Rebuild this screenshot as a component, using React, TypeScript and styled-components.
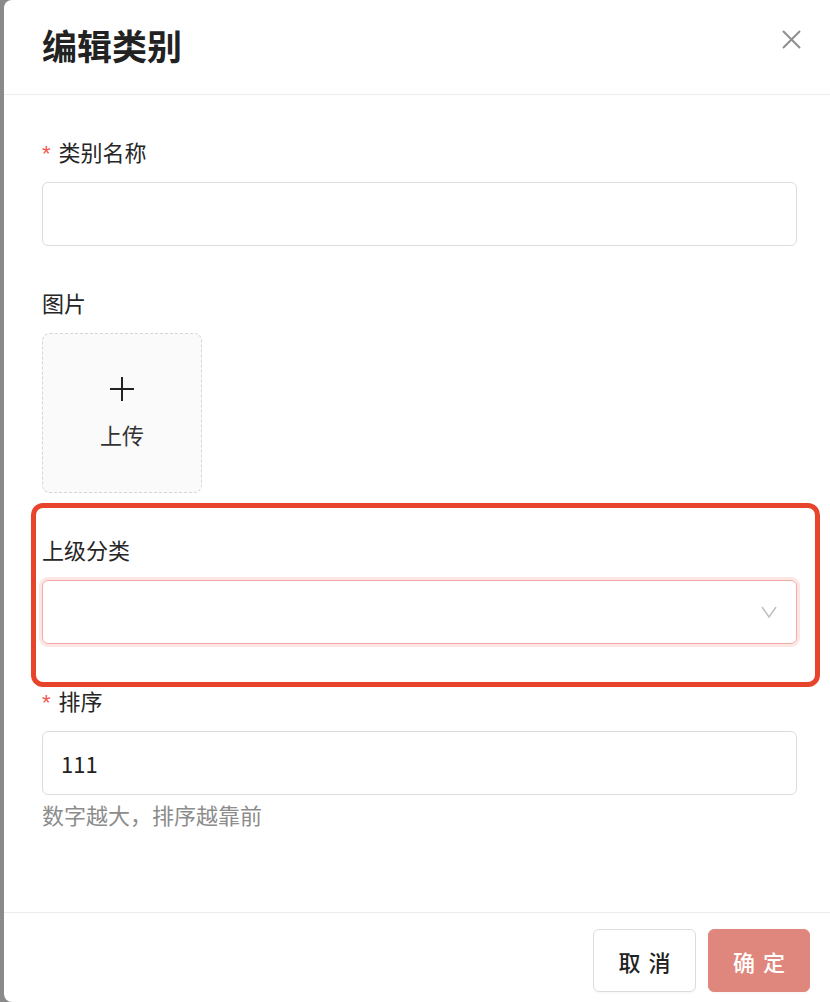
import React from "react";
import styled, { createGlobalStyle } from "styled-components";

const GlobalStyle = createGlobalStyle`
  html, body {
    margin: 0;
    padding: 0;
    height: 100%;
  }
  body {
    font-family: "Noto Sans CJK SC", "Noto Sans", sans-serif;
    color: #303133;
  }
  #root {
    height: 100%;
  }
`;

const Backdrop = styled.div`
  height: 100vh;
  background: #8a8a8a;
  padding-left: 4px;
  box-sizing: border-box;
  display: flex;
  overflow: hidden;
`;

const Dialog = styled.div`
  flex: 1;
  background: #fff;
  border-radius: 8px 0 0 8px;
  display: flex;
  flex-direction: column;
`;

const Header = styled.div`
  height: 95px;
  box-sizing: border-box;
  padding: 22px 28px 0 38px;
  border-bottom: 1px solid #ececec;
  display: flex;
  justify-content: space-between;
  align-items: flex-start;
`;

const Title = styled.h2`
  margin: 0;
  font-size: 35px;
  line-height: 46px;
  font-weight: 700;
  color: #222;
`;

const CloseButton = styled.button`
  border: none;
  background: none;
  padding: 0;
  margin-top: 6px;
  width: 22px;
  height: 22px;
  display: flex;
  align-items: center;
  justify-content: center;
  cursor: pointer;
`;

const Body = styled.div`
  flex: 1;
  padding: 41px 33px 0 38px;
`;

const FormItem = styled.div<{ $marked?: boolean }>`
  position: relative;
  margin-bottom: 41px;

  ${(p) =>
    p.$marked &&
    `
    &::after {
      content: "";
      position: absolute;
      top: -31px;
      bottom: -43px;
      left: -11px;
      right: -23px;
      border: 5px solid #e8432b;
      border-radius: 12px;
      pointer-events: none;
    }
  `}
`;

const Label = styled.div`
  font-size: 22px;
  line-height: 30px;
  color: #262626;
  margin-bottom: 16px;
  display: flex;
  align-items: center;
`;

const Required = styled.span`
  color: #f2564a;
  font-size: 22px;
  margin-right: 8px;
  font-family: "Liberation Sans", sans-serif;
  position: relative;
  top: 3px;
`;

const Input = styled.input<{ $danger?: boolean }>`
  display: block;
  width: 100%;
  height: 64px;
  box-sizing: border-box;
  border: 1px solid #dcdcdc;
  border-radius: 6px;
  padding: 0 18px;
  font-size: 22px;
  font-family: "Noto Sans CJK SC", "Noto Sans", sans-serif;
  color: #222;
  outline: none;
  background: #fff;
`;

const SelectBox = styled.div`
  height: 64px;
  box-sizing: border-box;
  border: 1px solid #f3aca4;
  border-radius: 6px;
  box-shadow: 0 0 0 3px #fbe6e3;
  display: flex;
  align-items: center;
  justify-content: flex-end;
  padding-right: 19px;
`;

const Uploader = styled.div`
  width: 160px;
  height: 160px;
  box-sizing: border-box;
  border: 1px dashed #d6d6d6;
  border-radius: 8px;
  background: #fafafa;
  display: flex;
  flex-direction: column;
  align-items: center;
  justify-content: center;
  gap: 18px;
`;

const UploadText = styled.div`
  font-size: 22px;
  line-height: 30px;
  color: #333;
`;

const Help = styled.div`
  margin-top: 4px;
  font-size: 22px;
  line-height: 30px;
  color: #8c8c8c;
`;

const Footer = styled.div`
  height: 90px;
  box-sizing: border-box;
  border-top: 1px solid #ececec;
  padding: 16px 20px 0 0;
  display: flex;
  justify-content: flex-end;
  align-items: flex-start;
  gap: 12px;
`;

const Button = styled.button<{ $primary?: boolean }>`
  height: 63px;
  width: ${(p) => (p.$primary ? "102px" : "103px")};
  box-sizing: border-box;
  border-radius: 6px;
  border: 1px solid ${(p) => (p.$primary ? "#e0877d" : "#dcdcdc")};
  background: ${(p) => (p.$primary ? "#e0877d" : "#fff")};
  color: ${(p) => (p.$primary ? "#fff" : "#222")};
  font-family: "Noto Sans CJK SC", "Noto Sans", sans-serif;
  font-size: 22px;
  font-weight: 500;
  letter-spacing: 8px;
  padding: 0 0 0 8px;
  box-shadow: 0 2px 0 rgba(0, 0, 0, 0.02);
  cursor: pointer;
`;

export default function App() {
  return (
    <>
      <GlobalStyle />
      <Backdrop>
        <Dialog>
          <Header>
            <Title>编辑类别</Title>
            <CloseButton aria-label="close">
              <svg width="19" height="19" viewBox="0 0 19 19">
                <path d="M1 1L18 18M18 1L1 18" stroke="#8e8e8e" strokeWidth="2" />
              </svg>
            </CloseButton>
          </Header>
          <Body>
            <FormItem>
              <Label>
                <Required>*</Required>类别名称
              </Label>
              <Input defaultValue="" />
            </FormItem>
            <FormItem>
              <Label>图片</Label>
              <Uploader>
                <svg width="24" height="24" viewBox="0 0 24 24">
                  <path d="M12 0V24M0 12H24" stroke="#222" strokeWidth="2" />
                </svg>
                <UploadText>上传</UploadText>
              </Uploader>
            </FormItem>
            <FormItem $marked>
              <Label>上级分类</Label>
              <SelectBox>
                <svg width="16" height="12" viewBox="0 0 16 12">
                  <polyline points="1,1 8,11 15,1" fill="none" stroke="#bdbdbd" strokeWidth="1.4" />
                </svg>
              </SelectBox>
            </FormItem>
            <FormItem>
              <Label>
                <Required>*</Required>排序
              </Label>
              <Input defaultValue="111" />
              <Help>数字越大，排序越靠前</Help>
            </FormItem>
          </Body>
          <Footer>
            <Button>取消</Button>
            <Button $primary>确定</Button>
          </Footer>
        </Dialog>
      </Backdrop>
    </>
  );
}
